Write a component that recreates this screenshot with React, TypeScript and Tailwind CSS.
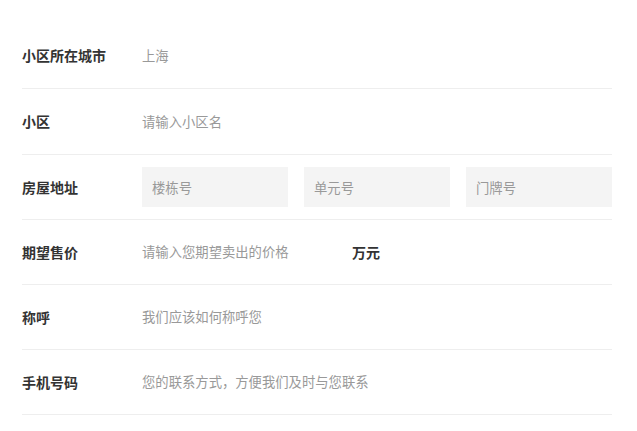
import React from "react";

const font = { fontFamily: '"Noto Sans CJK SC", "Noto Sans", sans-serif' };

function Row({ label, h, children }: { label: string; h: string; children: React.ReactNode }) {
  return (
    <div className={`flex items-center border-b border-[#eeeeee] ${h}`}>
      <div className="w-[120px] shrink-0 text-[14px] font-bold text-[#333333]">{label}</div>
      <div className="flex flex-1 items-center">{children}</div>
    </div>
  );
}

export default function App() {
  return (
    <div className="h-[431px] w-[637px] bg-white pt-[23px] pl-[22px] pr-[25px]" style={font}>
      <Row label="小区所在城市" h="h-[66px]">
        <span className="text-[13.33px] text-[#999999]">上海</span>
      </Row>
      <Row label="小区" h="h-[66px]">
        <input
          className="w-full bg-transparent text-[13.33px] text-[#333] outline-none placeholder:text-[#999999]"
          placeholder="请输入小区名"
        />
      </Row>
      <Row label="房屋地址" h="h-[65px]">
        <div className="flex w-full gap-[16px]">
          {["楼栋号", "单元号", "门牌号"].map((p) => (
            <input
              key={p}
              className="h-[40px] w-[146px] bg-[#f4f4f4] px-[10px] text-[13.33px] text-[#333] outline-none placeholder:text-[#999999]"
              placeholder={p}
            />
          ))}
        </div>
      </Row>
      <Row label="期望售价" h="h-[65px]">
        <input
          className="w-[200px] bg-transparent text-[13.33px] text-[#333] outline-none placeholder:text-[#999999]"
          placeholder="请输入您期望卖出的价格"
        />
        <span className="ml-[10px] text-[14px] font-bold text-[#333333]">万元</span>
      </Row>
      <Row label="称呼" h="h-[65px]">
        <input
          className="w-full bg-transparent text-[13.33px] text-[#333] outline-none placeholder:text-[#999999]"
          placeholder="我们应该如何称呼您"
        />
      </Row>
      <Row label="手机号码" h="h-[65px]">
        <input
          className="w-full bg-transparent text-[13.33px] text-[#333] outline-none placeholder:text-[#999999]"
          placeholder="您的联系方式，方便我们及时与您联系"
        />
      </Row>
    </div>
  );
}
